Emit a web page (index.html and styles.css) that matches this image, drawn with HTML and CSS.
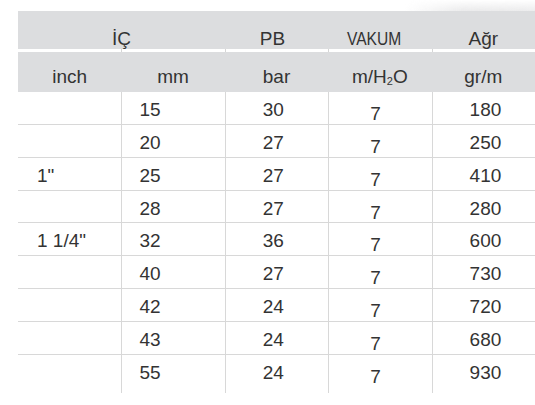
FILE: index.html
```html
<!DOCTYPE html>
<html lang="tr">
<head>
<meta charset="utf-8">
<title>Tablo</title>
<link rel="stylesheet" href="styles.css">
</head>
<body>
<div class="sheet">
  <div class="shade"></div>
  <div class="table">
    <div class="hd hd1 span2">İÇ</div>
    <div class="hd hd1 pb">PB</div>
    <div class="hd hd1"><span class="vakum">VAKUM</span></div>
    <div class="hd hd1">Ağr</div>

    <div class="gap first"></div>
    <div class="gap"></div>
    <div class="gap"></div>
    <div class="gap"></div>
    <div class="gap"></div>

    <div class="hd hd2">inch</div>
    <div class="hd hd2">mm</div>
    <div class="hd hd2">bar</div>
    <div class="hd hd2"><span class="raise">m/H<sub>2</sub>O</span></div>
    <div class="hd hd2">gr/m</div>

    <div class="td c1"></div><div class="td c2">15</div><div class="td c3">30</div><div class="td c4"><span class="low">7</span></div><div class="td c5">180</div>
    <div class="td c1"></div><div class="td c2">20</div><div class="td c3">27</div><div class="td c4"><span class="low">7</span></div><div class="td c5">250</div>
    <div class="td c1">1"</div><div class="td c2">25</div><div class="td c3">27</div><div class="td c4"><span class="low">7</span></div><div class="td c5">410</div>
    <div class="td c1"></div><div class="td c2">28</div><div class="td c3">27</div><div class="td c4"><span class="low">7</span></div><div class="td c5">280</div>
    <div class="td c1">1 1/4"</div><div class="td c2">32</div><div class="td c3">36</div><div class="td c4"><span class="low">7</span></div><div class="td c5">600</div>
    <div class="td c1"></div><div class="td c2">40</div><div class="td c3">27</div><div class="td c4"><span class="low">7</span></div><div class="td c5">730</div>
    <div class="td c1"></div><div class="td c2">42</div><div class="td c3">24</div><div class="td c4"><span class="low">7</span></div><div class="td c5">720</div>
    <div class="td c1"></div><div class="td c2">43</div><div class="td c3">24</div><div class="td c4"><span class="low">7</span></div><div class="td c5">680</div>
    <div class="td c1 last"></div><div class="td c2 last">55</div><div class="td c3 last">24</div><div class="td c4 last"><span class="low">7</span></div><div class="td c5 last">930</div>
  </div>
</div>
</body>
</html>
```

FILE: styles.css
```css
* {
  box-sizing: border-box;
}

html, body {
  margin: 0;
  padding: 0;
  background: #ffffff;
}

body {
  width: 535px;
  height: 405px;
  overflow: hidden;
  font-family: "Liberation Sans", Arial, sans-serif;
  font-size: 19px;
  color: #333333;
}

.sheet {
  position: relative;
  padding: 11px 0 0 18px;
}

.shade {
  position: absolute;
  top: 0;
  right: 0;
  width: 130px;
  height: 11px;
  background: linear-gradient(90deg, rgba(235,235,236,0) 0%, rgba(232,232,233,0.9) 45%, rgba(236,236,237,1) 100%);
  -webkit-mask-image: linear-gradient(180deg, rgba(0,0,0,0) 0%, rgba(0,0,0,1) 100%);
  mask-image: linear-gradient(180deg, rgba(0,0,0,0) 0%, rgba(0,0,0,1) 100%);
}

.table {
  display: grid;
  grid-template-columns: repeat(5, 1fr);
  grid-template-rows: 38px 3px 40px repeat(8, 32.86px) 38px;
  width: 517px;
}

.hd {
  background: #dcdddf;
  text-align: center;
  white-space: nowrap;
}

.hd1 {
  padding-top: 17px;
  line-height: 21px;
}

.hd2 {
  padding-top: 9px;
  line-height: 31px;
}

.span2 {
  grid-column: span 2;
}

.pb {
  padding-right: 8px;
}

.vakum {
  display: inline-block;
  vertical-align: 2px;
  transform: translateX(-6px) scaleX(0.82);
}

.raise {
  display: inline-block;
  vertical-align: 2px;
}

.raise sub {
  font-size: 11px;
  vertical-align: -2px;
  line-height: 0;
}

.gap {
  background: #ffffff;
  border-left: 1px solid #d6d6d6;
}

.gap.first {
  border-left: none;
}

.td {
  padding-top: 7px;
  line-height: 22px;
  border-bottom: 1px solid #d8d8d8;
  white-space: nowrap;
}

.td.last {
  border-bottom: none;
}

.c1 {
  padding-left: 19px;
}

.c2 {
  border-left: 1px solid #d8d8d8;
  padding-left: 17px;
}

.c3 {
  border-left: 1px solid #d8d8d8;
  padding-left: 37px;
}

.c4 {
  border-left: 1px solid #d8d8d8;
  padding-left: 41px;
}

.c5 {
  border-left: 1px solid #d8d8d8;
  padding-left: 37px;
}

.low {
  display: inline-block;
  vertical-align: -4px;
}
```
